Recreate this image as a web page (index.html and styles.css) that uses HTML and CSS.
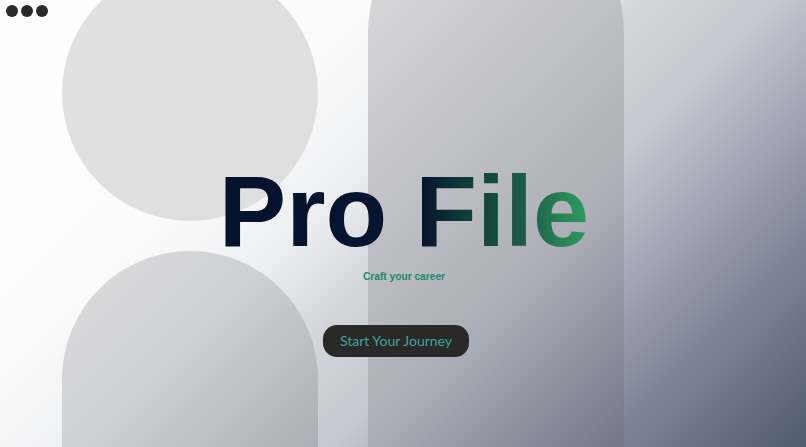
FILE: index.html
```html
<!DOCTYPE html>
<html lang="en">
<head>
<meta charset="utf-8">
<title>Pro File</title>
<link rel="stylesheet" href="styles.css">
</head>
<body>
<div class="page">
  <div class="shape shape-head"></div>
  <div class="shape shape-body"></div>
  <div class="shape shape-tall"></div>
  <header class="header">
    <span class="dot"></span><span class="dot"></span><span class="dot"></span>
  </header>
  <main class="hero">
    <h1 class="title">Pro File</h1>
    <p class="subtitle">Craft your career</p>
    <button class="cta">Start Your Journey</button>
  </main>
</div>
</body>
</html>
```

FILE: styles.css
```css
html, body {
  margin: 0;
  padding: 0;
}

body {
  font-family: "Liberation Sans", Arial, sans-serif;
}

.page {
  position: relative;
  width: 806px;
  height: 447px;
  overflow: hidden;
  background: linear-gradient(135deg, #ffffff 0%, #fbfbfb 30%, #eeeff1 42%, #d3d5db 52%, #c5c8d0 62%, #80869a 83%, #525a70 100%);
}

.shape {
  position: absolute;
  z-index: 0;
}

.shape-head {
  left: 62px;
  top: -35px;
  width: 256px;
  height: 256px;
  border-radius: 50%;
  background: linear-gradient(135deg, #e1e1e1 0%, #dedede 100%);
}

.shape-body {
  left: 62px;
  top: 251px;
  width: 256px;
  height: 220px;
  border-radius: 128px 128px 0 0;
  background: linear-gradient(135deg, #dddddd 0%, #cfd0d3 45%, #c6c7cc 58%, #a9abb3 100%);
}

.shape-tall {
  left: 368px;
  top: -96px;
  width: 256px;
  height: 560px;
  border-radius: 128px 128px 0 0;
  background: linear-gradient(135deg, #dfdfdf 0%, #c8c8cc 31%, #abaeb6 66%, #6e7384 100%);
}

.header {
  position: relative;
  z-index: 1;
  display: flex;
  gap: 3px;
  padding: 5px 6px 0;
  height: 12px;
}

.dot {
  width: 12px;
  height: 12px;
  border-radius: 50%;
  background: #2b2929;
}

.hero {
  position: relative;
  z-index: 1;
  display: flex;
  flex-direction: column;
  align-items: center;
  padding-top: 144px;
}

.title {
  margin: 0 0 0 2px;
  font-family: "Liberation Sans", Arial, sans-serif;
  font-weight: 700;
  font-size: 101px;
  line-height: 100px;
  letter-spacing: 0;
  background: linear-gradient(90deg, #03122d 0%, #04152f 55%, #0f3a38 66%, #1b5a47 82%, #2f9e5f 100%);
  -webkit-background-clip: text;
  background-clip: text;
  color: transparent;
}

.subtitle {
  margin: 10px 0 0 2px;
  font-size: 10.2px;
  line-height: 12px;
  font-weight: 700;
  color: #178a6c;
}

.cta {
  margin: 42px 14px 0 0;
  height: 32px;
  padding: 0 17px;
  border: none;
  border-radius: 14px;
  background: #2a2928;
  color: #3fa3a3;
  font-family: Lato, "Open Sans", sans-serif;
  font-size: 14px;
  line-height: 32px;
  cursor: pointer;
}
```
